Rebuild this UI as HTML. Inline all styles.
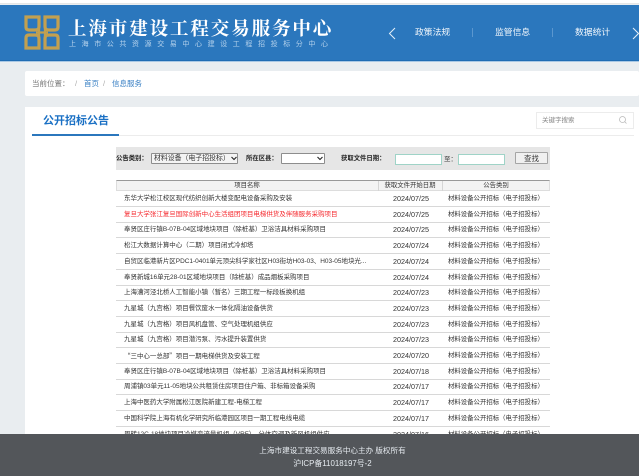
<!DOCTYPE html>
<html lang="zh"><head><meta charset="utf-8"><style>
html,body{margin:0;padding:0}
body{width:639px;height:476px;overflow:hidden;background:#e9edf0;position:relative;font-family:"Liberation Sans","Noto Sans CJK SC",sans-serif;color:#555}
div,span{position:absolute;white-space:nowrap;box-sizing:border-box}
#w{left:0;top:0;width:639px;height:476px;filter:blur(.3px)}
.r{left:116px;width:434px;height:16px;border-bottom:1px solid #d8d8d8;font-size:6.480px;line-height:15px;color:#333}
.r .n{left:8px}
.r .d{left:260px;width:70px;text-align:center;font-size:7.200px}
.r .c{left:332px;font-size:6.400px}
.red{color:#f5282d}
.red .d,.red .c{color:#333}
.l{font-weight:bold;font-size:6.350px;line-height:11px;color:#222;top:153px}
.h{top:181px;text-align:center;font-size:6.400px;line-height:10px;color:#333}
.b{top:77px;font-size:7.500px;line-height:13px}
</style></head><body><div id="w">
<div style="left:0;top:0;width:639px;height:4px;background:#fff;border-bottom:1px solid #e6e6e6"></div>
<div style="left:0;top:5px;width:639px;height:56px;background:#2b77bd;border-bottom:1px solid #1f6cb3;box-shadow:0 1px 0 #a9c8e4"></div>
<svg style="position:absolute;left:24px;top:15px" width="36" height="35" viewBox="0 0 36 35">
<g fill="none" stroke="#c2a050" stroke-width="3.2">
<path d="M2 2H15V11C15 14 14 15 11 15H5C3 15 2 14 2 12Z"/>
<path d="M21 2H34V12C34 14 33 15 31 15H25C22 15 21 14 21 11Z"/>
<path d="M2 33H15V24C15 21 14 20 11 20H5C3 20 2 21 2 23Z"/>
<path d="M21 33H34V23C34 21 33 20 31 20H25C22 20 21 21 21 24Z"/>
<path d="M15 12C15 16 16 17.500 12 17.500H24C20 17.500 21 16 21 12M15 23C15 19 16 17.500 12 17.500M21 23C21 19 20 17.500 24 17.500" stroke-width="2.200"/>
</g></svg>
<div style="left:68px;top:14px;font:bold 18.500px/28px 'Noto Serif CJK SC',serif;letter-spacing:1.900px;color:#fff">上海市建设工程交易服务中心</div>
<div style="left:69px;top:40px;font-size:7px;line-height:10px;letter-spacing:5.600px;color:#b5d2ec">上海市公共资源交易中心建设工程招投标分中心</div>
<svg style="position:absolute;left:386px;top:26px" width="14" height="14"><path d="M9 2 3.500 7.500 9 13" fill="none" stroke="#e5f0f9" stroke-width="1"/></svg>
<div style="left:415px;top:25px;font-size:8.800px;line-height:14px;color:#f2f7fc">政策法规</div>
<div style="left:472px;top:28px;width:1px;height:9px;background:#5b97cf"></div>
<div style="left:495px;top:25px;font-size:8.800px;line-height:14px;color:#f2f7fc">监管信息</div>
<div style="left:552px;top:28px;width:1px;height:9px;background:#5b97cf"></div>
<div style="left:575px;top:25px;font-size:8.800px;line-height:14px;color:#f2f7fc">数据统计</div>
<svg style="position:absolute;left:632px;top:26px" width="7" height="14"><path d="M1 2 6.500 7.500 1 13" fill="none" stroke="#e5f0f9" stroke-width="1"/></svg>

<div style="left:25px;top:71px;width:614px;height:25px;background:#fff;border-radius:2px"></div>
<div class="b" style="left:32px;color:#777">当前位置：</div>
<div class="b" style="left:75px;color:#aaa">/</div>
<div class="b" style="left:84px;color:#3a80c4">首页</div>
<div class="b" style="left:103px;color:#aaa">/</div>
<div class="b" style="left:112px;color:#3a80c4">信息服务</div>

<div style="left:25px;top:107px;width:614px;height:330px;background:#fff"></div>
<div style="left:32px;top:135px;width:602px;height:1px;background:#ececec"></div>
<div style="left:32px;top:134px;width:87px;height:2px;background:#2b77bd"></div>
<div style="left:43px;top:113px;font-weight:bold;font-size:11px;line-height:16px;color:#1a70c4">公开招标公告</div>
<div style="left:536px;top:112px;width:98px;height:17px;border:1px solid #ececec;background:#fff"></div>
<div style="left:542px;top:115px;font-size:6.500px;line-height:11px;color:#888">关键字搜索</div>
<svg style="position:absolute;left:618px;top:115px" width="10" height="10"><circle cx="4.500" cy="4.500" r="3" fill="none" stroke="#bbb" stroke-width=".8"/><path d="M6.800 6.800 8.500 8.500" stroke="#bbb" stroke-width=".8"/></svg>

<div style="left:116px;top:147px;width:434px;height:23px;background:#e6e6e6"></div>
<div class="l" style="left:116px">公告类别：</div>
<div style="left:151px;top:153px;width:87px;height:11px;background:#f4f4f4;border:1px solid #8d8d8d;border-radius:1px;font-size:6.900px;line-height:9px;color:#333;padding-left:2px">材料设备（电子招投标）</div>
<div style="left:229px;top:154px;width:8px;height:9px;background:#f4f4f4"></div>
<svg style="position:absolute;left:231px;top:156px" width="6" height="5"><path d="M.5 1 3 3.500 5.500 1" fill="none" stroke="#222" stroke-width="1.100"/></svg>
<div class="l" style="left:246px">所在区县：</div>
<div style="left:281px;top:153px;width:44px;height:11px;background:#fff;border:1px solid #8d8d8d;border-radius:1px"></div>
<svg style="position:absolute;left:317px;top:156px" width="6" height="5"><path d="M.5 1 3 3.500 5.500 1" fill="none" stroke="#222" stroke-width="1.100"/></svg>
<div class="l" style="left:341px">获取文件日期：</div>
<div style="left:395px;top:154px;width:47px;height:11px;background:#fff;border:1px solid #9fd3c7"></div>
<div style="left:444px;top:154px;font-size:6.500px;line-height:11px;color:#444">至：</div>
<div style="left:458px;top:154px;width:47px;height:11px;background:#fff;border:1px solid #9fd3c7"></div>
<div style="left:515px;top:152px;width:33px;height:12px;background:#f0f0f0;border:1px solid #a5a5a5;border-radius:1px;font-size:7.500px;line-height:12px;text-align:center;color:#333">查找</div>

<div style="left:116px;top:180px;width:434px;height:11px;background:#f3f3f3;border-top:1.500px solid #999;border-bottom:1px solid #ddd;border-right:1px solid #ddd;border-left:1px solid #ddd"></div>
<div style="left:378px;top:181px;width:1px;height:10px;background:#d5d5d5"></div>
<div style="left:442px;top:181px;width:1px;height:10px;background:#d5d5d5"></div>
<div class="h" style="left:116px;width:262px">项目名称</div>
<div class="h" style="left:378px;width:64px">获取文件开始日期</div>
<div class="h" style="left:442px;width:108px">公告类别</div>

<div class="r" style="top:191px"><span class="n">东华大学松江校区现代纺织创新大楼变配电设备采购及安装</span><span class="d">2024/07/25</span><span class="c">材料设备公开招标（电子招投标）</span></div>
<div class="r red" style="top:206.700px"><span class="n">复旦大学张江复旦国际创新中心生活组团项目电梯供货及伴随服务采购项目</span><span class="d">2024/07/25</span><span class="c">材料设备公开招标（电子招投标）</span></div>
<div class="r" style="top:222.400px"><span class="n">奉贤区庄行镇B-07B-04区域地块项目（除桩基）卫浴洁具材料采购项目</span><span class="d">2024/07/25</span><span class="c">材料设备公开招标（电子招投标）</span></div>
<div class="r" style="top:238.100px"><span class="n">松江大数据计算中心（二期）项目闭式冷却塔</span><span class="d">2024/07/24</span><span class="c">材料设备公开招标（电子招投标）</span></div>
<div class="r" style="top:253.800px"><span class="n">自贸区临港新片区PDC1-0401单元顶尖科学家社区H03街坊H03-03、H03-05地块光...</span><span class="d">2024/07/24</span><span class="c">材料设备公开招标（电子招投标）</span></div>
<div class="r" style="top:269.500px"><span class="n">奉贤新城16单元28-01区域地块项目（除桩基）成品烟板采购项目</span><span class="d">2024/07/24</span><span class="c">材料设备公开招标（电子招投标）</span></div>
<div class="r" style="top:285.200px"><span class="n">上海漕河泾北桥人工智能小镇（暂名）三期工程一标段板换机组</span><span class="d">2024/07/23</span><span class="c">材料设备公开招标（电子招投标）</span></div>
<div class="r" style="top:300.900px"><span class="n">九星城（九宫格）项目餐饮废水一体化隔油设备供货</span><span class="d">2024/07/23</span><span class="c">材料设备公开招标（电子招投标）</span></div>
<div class="r" style="top:316.600px"><span class="n">九星城（九宫格）项目风机盘管、空气处理机组供应</span><span class="d">2024/07/23</span><span class="c">材料设备公开招标（电子招投标）</span></div>
<div class="r" style="top:332.300px"><span class="n">九星城（九宫格）项目潜污泵、污水提升装置供货</span><span class="d">2024/07/23</span><span class="c">材料设备公开招标（电子招投标）</span></div>
<div class="r" style="top:348px"><span class="n" style="font-family:'Noto Sans CJK SC',sans-serif">“三中心一总部”项目一期电梯供货及安装工程</span><span class="d">2024/07/20</span><span class="c">材料设备公开招标（电子招投标）</span></div>
<div class="r" style="top:363.700px"><span class="n">奉贤区庄行镇B-07B-04区域地块项目（除桩基）卫浴洁具材料采购项目</span><span class="d">2024/07/18</span><span class="c">材料设备公开招标（电子招投标）</span></div>
<div class="r" style="top:379.400px"><span class="n">周浦镇03单元11-05地块公共租赁住房项目住户箱、非标箱设备采购</span><span class="d">2024/07/17</span><span class="c">材料设备公开招标（电子招投标）</span></div>
<div class="r" style="top:395.100px"><span class="n">上海中医药大学附属松江医院新建工程-电梯工程</span><span class="d">2024/07/17</span><span class="c">材料设备公开招标（电子招投标）</span></div>
<div class="r" style="top:410.800px"><span class="n">中国科学院上海有机化学研究所临港园区项目一期工程电线电缆</span><span class="d">2024/07/17</span><span class="c">材料设备公开招标（电子招投标）</span></div>
<div class="r" style="top:426.500px"><span class="n">周转12C-18地块项目冷媒变流量机组（VRF）、分体空调及新风机组供应</span><span class="d">2024/07/16</span><span class="c">材料设备公开招标（电子招投标）</span></div>

<div style="left:0;top:434px;width:639px;height:42px;background:#53565a"></div>
<div style="left:26px;top:445px;width:613px;text-align:center;font-size:7.600px;line-height:12px;color:#e6ebf0">上海市建设工程交易服务中心主办 版权所有</div>
<div style="left:26px;top:458px;width:613px;text-align:center;font-size:7.900px;line-height:12px;color:#e6ebf0">沪ICP备11018197号-2</div>
</div></body></html>
